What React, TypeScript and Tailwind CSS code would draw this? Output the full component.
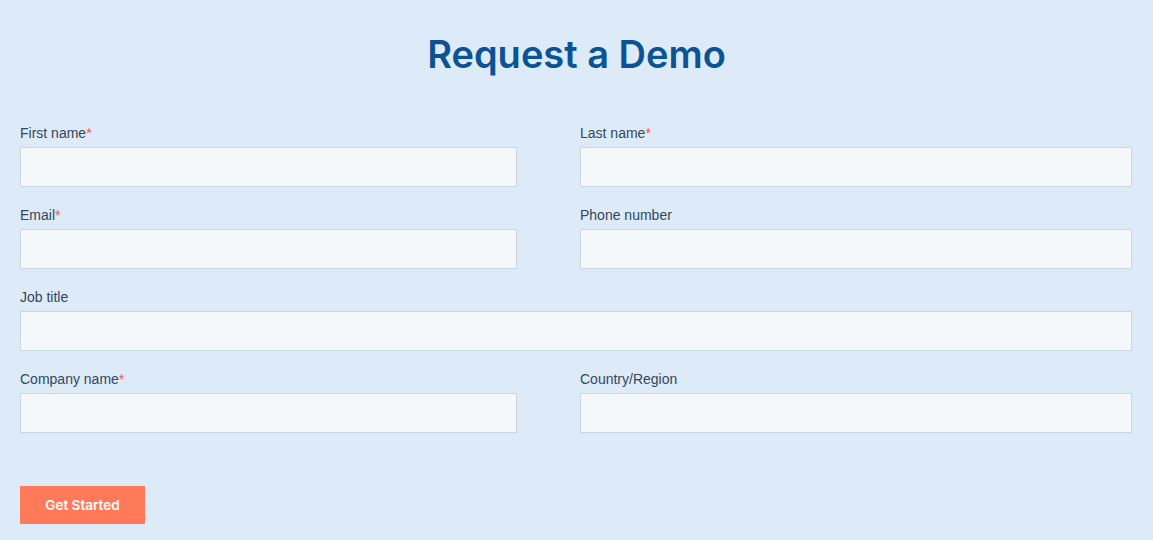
import React from "react";

function Field({ label, required }: { label: string; required?: boolean }) {
  return (
    <div className="flex flex-col">
      <label className="text-[14px] leading-[20px] text-[#33475b] mb-[4px]" style={{ fontFamily: '"Liberation Sans", Arial, sans-serif' }}>
        {label}
        {required && <span className="text-[#f2545b]">*</span>}
      </label>
      <input className="h-[40px] w-full bg-[#f5f8fa] border border-[#cbd6e2] outline-none" />
    </div>
  );
}

export default function App() {
  return (
    <div className="min-h-[540px] w-full bg-[#ddebf8] px-[20px]" style={{ fontFamily: 'Inter, "Liberation Sans", sans-serif' }}>
      <h1 className="pt-[30px] text-center text-[38px] leading-[48px] font-semibold text-[#0b5394]">Request a Demo</h1>
      <div className="mt-[45px] w-[1112px] grid grid-cols-[497px_552px] gap-x-[63px] gap-y-[18px]">
        <Field label="First name" required />
        <Field label="Last name" required />
        <Field label="Email" required />
        <Field label="Phone number" />
        <div className="col-span-2">
          <Field label="Job title" />
        </div>
        <Field label="Company name" required />
        <Field label="Country/Region" />
      </div>
      <button className="mt-[53px] h-[38px] w-[125px] bg-[#ff7a59] text-white text-[13.5px] font-semibold">Get Started</button>
    </div>
  );
}
